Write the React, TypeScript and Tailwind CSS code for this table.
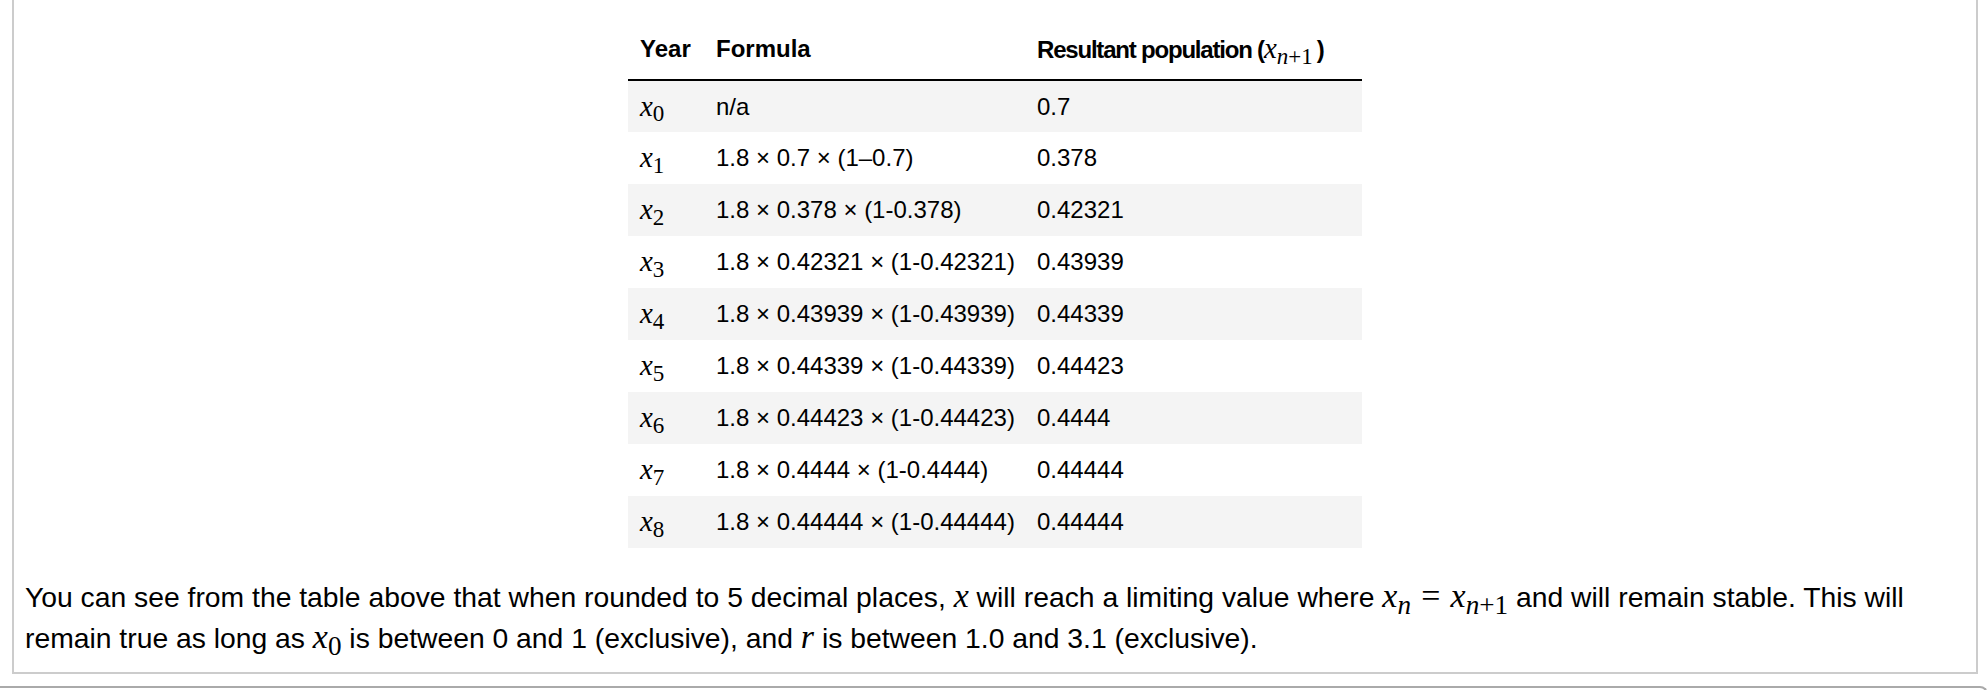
import React from "react";

type Sub = { text: string; italic?: boolean }[];

function MathX({ sub }: { sub?: Sub }) {
  return (
    <span className="font-['Liberation_Serif',serif] text-[1.2em] font-normal tracking-normal">
      <span className="italic">x</span>
      {sub && (
        <sub className="text-[0.8em]">
          {sub.map((s, i) => (
            <span key={i} className={s.italic ? "italic" : ""}>
              {s.text}
            </span>
          ))}
        </sub>
      )}
    </span>
  );
}

const nPlus1: Sub = [{ text: "n", italic: true }, { text: "+1" }];
const nSub: Sub = [{ text: "n", italic: true }];

const rows = [
  { formula: "n/a", result: "0.7" },
  { formula: "1.8 × 0.7 × (1–0.7)", result: "0.378" },
  { formula: "1.8 × 0.378 × (1-0.378)", result: "0.42321" },
  { formula: "1.8 × 0.42321 × (1-0.42321)", result: "0.43939" },
  { formula: "1.8 × 0.43939 × (1-0.43939)", result: "0.44339" },
  { formula: "1.8 × 0.44339 × (1-0.44339)", result: "0.44423" },
  { formula: "1.8 × 0.44423 × (1-0.44423)", result: "0.4444" },
  { formula: "1.8 × 0.4444 × (1-0.4444)", result: "0.44444" },
  { formula: "1.8 × 0.44444 × (1-0.44444)", result: "0.44444" },
];

export default function App() {
  return (
    <div className="min-h-screen bg-white font-['Liberation_Sans',Arial,sans-serif] text-black">
      <div className="ml-[12px] mr-[10px] border-x-2 border-b-2 border-[#cccccc] px-[11px] pb-[14px]">
        <table className="mx-auto border-collapse text-[24px]">
          <thead>
            <tr className="border-b-2 border-black text-[24px]">
              <th className="w-[76px] pl-3 pt-[33px] pb-[14px] text-left font-bold leading-[30px]">Year</th>
              <th className="w-[321px] pl-3 pt-[33px] pb-[14px] text-left font-bold leading-[30px]">Formula</th>
              <th className="w-[337px] pl-3 pt-[33px] pb-[14px] text-left font-bold leading-[30px] tracking-[-1.2px]">
                Resultant population (<MathX sub={nPlus1} />
                <span className="ml-[4px]">)</span>
              </th>
            </tr>
          </thead>
          <tbody>
            {rows.map((r, i) => (
              <tr key={i} className={i % 2 === 0 ? "bg-[#f4f4f4]" : "bg-white"}>
                <td className="h-[52px] pl-3 leading-[30px]">
                  <MathX sub={[{ text: String(i) }]} />
                </td>
                <td className="h-[52px] pl-3 leading-[30px]">{r.formula}</td>
                <td className="h-[52px] pl-3 leading-[30px]">{r.result}</td>
              </tr>
            ))}
          </tbody>
        </table>
        <p className="mt-[28px] text-[28.3px] leading-[40px]">
          You can see from the table above that when rounded to 5 decimal places, <MathX /> will reach a limiting
          value where <MathX sub={nSub} />
          <span className="mx-[0.3em] font-['Liberation_Serif',serif] text-[1.2em]">=</span>
          <MathX sub={nPlus1} /> and will remain stable. This will
          <br />
          remain true as long as <MathX sub={[{ text: "0" }]} /> is between 0 and 1 (exclusive), and{" "}
          <span className="font-['Liberation_Serif',serif] text-[1.2em] italic">r</span> is between 1.0 and 3.1
          (exclusive).
        </p>
      </div>
      <div className="mt-[12px] h-[20px] rounded-tr-[8px] border-t-2 border-r-2 border-[#aaaaaa]" />
    </div>
  );
}
